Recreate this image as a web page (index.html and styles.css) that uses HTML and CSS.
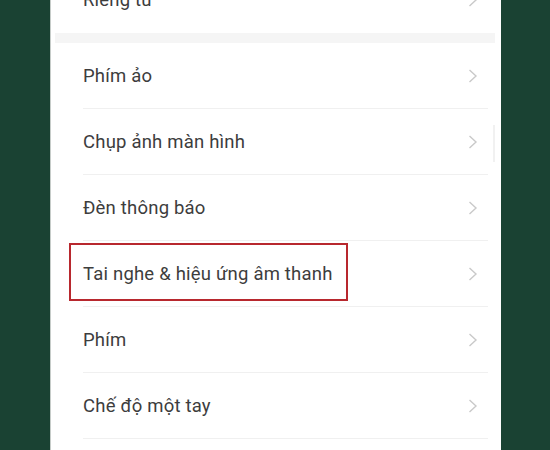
FILE: index.html
```html
<!DOCTYPE html>
<html lang="vi">
<head>
<meta charset="utf-8">
<link rel="stylesheet" href="styles.css">
</head>
<body>
<div class="frame">
  <div class="side side-left"></div>
  <div class="edge"></div>
  <div class="screen">
    <div class="list">
      <div class="row first"><span class="label">Riêng tư</span><span class="chev"><svg width="10" height="14" viewBox="0 0 10 14"><path d="M1.5 1 L8 7 L1.5 13" fill="none" stroke="#c9c9c9" stroke-width="1.4"/></svg></span></div>
    </div>
    <div class="gap"></div>
    <div class="list">
      <div class="row"><span class="label">Phím ảo</span><span class="chev"><svg width="10" height="14" viewBox="0 0 10 14"><path d="M1.5 1 L8 7 L1.5 13" fill="none" stroke="#c9c9c9" stroke-width="1.4"/></svg></span></div>
      <div class="row"><span class="label">Chụp ảnh màn hình</span><span class="chev"><svg width="10" height="14" viewBox="0 0 10 14"><path d="M1.5 1 L8 7 L1.5 13" fill="none" stroke="#c9c9c9" stroke-width="1.4"/></svg></span></div>
      <div class="row"><span class="label">Đèn thông báo</span><span class="chev"><svg width="10" height="14" viewBox="0 0 10 14"><path d="M1.5 1 L8 7 L1.5 13" fill="none" stroke="#c9c9c9" stroke-width="1.4"/></svg></span></div>
      <div class="row highlighted"><span class="label">Tai nghe &amp; hiệu ứng âm thanh</span><span class="chev"><svg width="10" height="14" viewBox="0 0 10 14"><path d="M1.5 1 L8 7 L1.5 13" fill="none" stroke="#c9c9c9" stroke-width="1.4"/></svg></span><span class="mark"></span></div>
      <div class="row"><span class="label">Phím</span><span class="chev"><svg width="10" height="14" viewBox="0 0 10 14"><path d="M1.5 1 L8 7 L1.5 13" fill="none" stroke="#c9c9c9" stroke-width="1.4"/></svg></span></div>
      <div class="row"><span class="label">Chế độ một tay</span><span class="chev"><svg width="10" height="14" viewBox="0 0 10 14"><path d="M1.5 1 L8 7 L1.5 13" fill="none" stroke="#c9c9c9" stroke-width="1.4"/></svg></span></div>
      <div class="row"><span class="label"></span></div>
    </div>
    <div class="scroll"></div>
  </div>
  <div class="side side-right"></div>
</div>
</body>
</html>
```
FILE: styles.css
```css
html, body {
  margin: 0;
  padding: 0;
  height: 100%;
  overflow: hidden;
  background: #1a4233;
}
.frame {
  display: flex;
  height: 450px;
  width: 550px;
}
.side {
  background: #1a4233;
}
.side-left { width: 50px; }
.side-right { width: 49px; }
.edge {
  width: 1px;
  background: #c6ccc9;
}
.screen {
  position: relative;
  width: 450px;
  background: #ffffff;
  overflow: hidden;
  display: flex;
  flex-direction: column;
  font-family: Roboto, "Noto Sans", "Liberation Sans", sans-serif;
}
.list {
  display: flex;
  flex-direction: column;
}
.row {
  position: relative;
  display: flex;
  align-items: center;
  justify-content: space-between;
  height: 65px;
  margin: 0 13px 0 32px;
  padding-right: 10px;
  border-bottom: 1px solid #f0f0f0;
  flex-shrink: 0;
}
.row.first {
  margin-top: -33px;
  border-bottom: none;
  height: 66px;
}
.label {
  font-size: 18.5px;
  color: #3d3d3d;
  letter-spacing: 0.2px;
}
.chev {
  display: flex;
  width: 10px;
  height: 14px;
}
.gap {
  height: 10px;
  margin: 0 6px 0 4px;
  background: #f5f5f5;
  flex-shrink: 0;
}
.mark {
  position: absolute;
  left: -14px;
  top: 2px;
  width: 275px;
  height: 54px;
  border: 2px solid #b8282e;
}
.scroll {
  position: absolute;
  right: 6px;
  top: 125px;
  width: 2px;
  height: 37px;
  background: #f1f1f1;
}
```
